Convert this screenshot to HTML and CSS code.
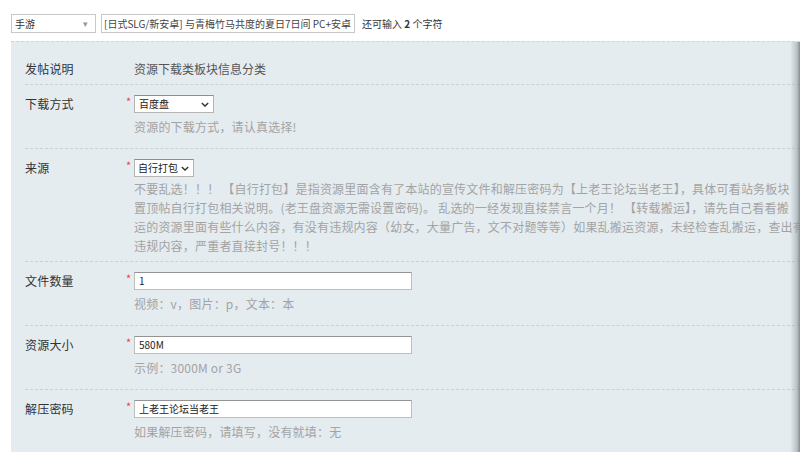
FILE: index.html
```html
<!DOCTYPE html>
<html lang="zh-CN">
<head>
    <meta charset="UTF-8">
    <meta name="viewport" content="width=device-width, initial-scale=1.0">
    <title>发帖</title>
    <link rel="stylesheet" href="styles.css">
</head>
<body>
    <div class="topbar">
        <div class="type-select">
            <span>手游</span>
            <span class="type-arrow">▾</span>
        </div>
        <div class="title-input">[日式SLG/新安卓] 与青梅竹马共度的夏日7日间 PC+安卓</div>
        <div class="counter">还可输入 <b>2</b> 个字符</div>
    </div>

    <div class="panel">
        <div class="row row-first">
            <div class="label">发帖说明</div>
            <div class="star"></div>
            <div class="field value">资源下载类板块信息分类</div>
        </div>

        <div class="row">
            <div class="label">下载方式</div>
            <div class="star">*</div>
            <div class="field">
                <div class="select select-wide">
                    <span>百度盘</span>
                    <svg class="chevron" viewBox="0 0 10 6" width="8" height="5"><path d="M1 1l4 4 4-4" fill="none" stroke="#333" stroke-width="1.7"/></svg>
                </div>
                <div class="hint">资源的下载方式，请认真选择!</div>
            </div>
        </div>

        <div class="row row-long">
            <div class="label">来源</div>
            <div class="star">*</div>
            <div class="field">
                <div class="select select-narrow">
                    <span>自行打包</span>
                    <svg class="chevron" viewBox="0 0 10 6" width="8" height="5"><path d="M1 1l4 4 4-4" fill="none" stroke="#333" stroke-width="1.7"/></svg>
                </div>
                <div class="hint hint-long">
                    <div>不要乱选！！！ 【自行打包】是指资源里面含有了本站的宣传文件和解压密码为【上老王论坛当老王】，具体可看站务板块</div>
                    <div>置顶帖自行打包相关说明。(老王盘资源无需设置密码)。 乱选的一经发现直接禁言一个月！ 【转载搬运】，请先自己看看搬</div>
                    <div>运的资源里面有些什么内容，有没有违规内容（幼女，大量广告，文不对题等等）如果乱搬运资源，未经检查乱搬运，查出有</div>
                    <div>违规内容，严重者直接封号！！！</div>
                </div>
            </div>
        </div>

        <div class="row">
            <div class="label">文件数量</div>
            <div class="star">*</div>
            <div class="field">
                <div class="text-input">1</div>
                <div class="hint">视频：v，图片：p，文本：本</div>
            </div>
        </div>

        <div class="row">
            <div class="label">资源大小</div>
            <div class="star">*</div>
            <div class="field">
                <div class="text-input">580M</div>
                <div class="hint">示例：3000M or 3G</div>
            </div>
        </div>

        <div class="row">
            <div class="label">解压密码</div>
            <div class="star">*</div>
            <div class="field">
                <div class="text-input">上老王论坛当老王</div>
                <div class="hint">如果解压密码，请填写，没有就填：无</div>
            </div>
        </div>
    </div>
</body>
</html>
```

FILE: styles.css
```css
body {
    margin: 0;
    background-color: white;
    color: #333;
    font-family: "Noto Sans CJK SC", "Microsoft YaHei", sans-serif;
    font-size: 12px;
    overflow: hidden;
}
.topbar {
    display: flex;
    align-items: center;
    padding: 14px 0 0 11px;
    height: 19px;
}
.type-select {
    width: 80px;
    height: 17px;
    border: 1px solid #c8c8c8;
    display: flex;
    align-items: center;
    justify-content: space-between;
    padding: 0 0 0 3px;
    font-size: 10px;
    color: #333;
}
.type-arrow {
    color: #999;
    font-size: 9px;
    width: 12px;
}
.title-input {
    margin-left: 5px;
    width: 248px;
    height: 17px;
    line-height: 17px;
    border: 1px solid #c8c8c8;
    padding: 0 2px;
    font-size: 10px;
    color: #444;
    white-space: nowrap;
    overflow: hidden;
}
.counter {
    margin-left: 7px;
    font-size: 10px;
    color: #333;
}
.panel {
    position: relative;
    margin: 8px 0 0 11px;
    background-color: #e5ecf0;
    border-top: 1px dashed #cdd5d9;
    overflow: hidden;
}
.panel::after {
    content: "";
    position: absolute;
    top: 0;
    right: 0;
    bottom: 0;
    width: 10px;
    background: linear-gradient(90deg, rgba(150, 158, 162, 0) 0%, rgba(150, 158, 162, 0.55) 70%, rgba(110, 115, 118, 0.8) 100%);
}
.row {
    display: flex;
    margin-left: 14px;
    padding: 10px 0 12px;
    border-bottom: 1px dashed #c9d1d5;
    line-height: 18px;
}
.row-first {
    padding: 18px 0 6px;
}
.row-long {
    padding-bottom: 6px;
}
.label {
    width: 101px;
    flex-shrink: 0;
    color: #333;
    letter-spacing: 0.2px;
}
.star {
    width: 8px;
    flex-shrink: 0;
    color: #f04040;
    font-size: 11px;
    line-height: 13px;
}
.field {
    flex: 1;
    min-width: 0;
}
.value {
    color: #555;
}
.select {
    box-sizing: border-box;
    height: 18px;
    display: flex;
    align-items: center;
    justify-content: space-between;
    background-color: white;
    border: 1px solid #b5b5b5;
    border-top-color: #8e8e8e;
    padding: 0 4px 0 4px;
    font-size: 10px;
    color: #222;
}
.select-wide {
    width: 80px;
}
.select-narrow {
    width: 60px;
    padding-left: 3px;
}
.text-input {
    box-sizing: border-box;
    width: 278px;
    height: 18px;
    line-height: 16px;
    background-color: white;
    border: 1px solid #bdbdbd;
    border-top-color: #949494;
    padding: 0 4px;
    font-size: 10px;
    color: #222;
}
.hint {
    margin-top: 4px;
    line-height: 19px;
    color: #a3a3a3;
    letter-spacing: 0.2px;
    white-space: nowrap;
}
.hint-long {
    margin-top: 2px;
}
```
